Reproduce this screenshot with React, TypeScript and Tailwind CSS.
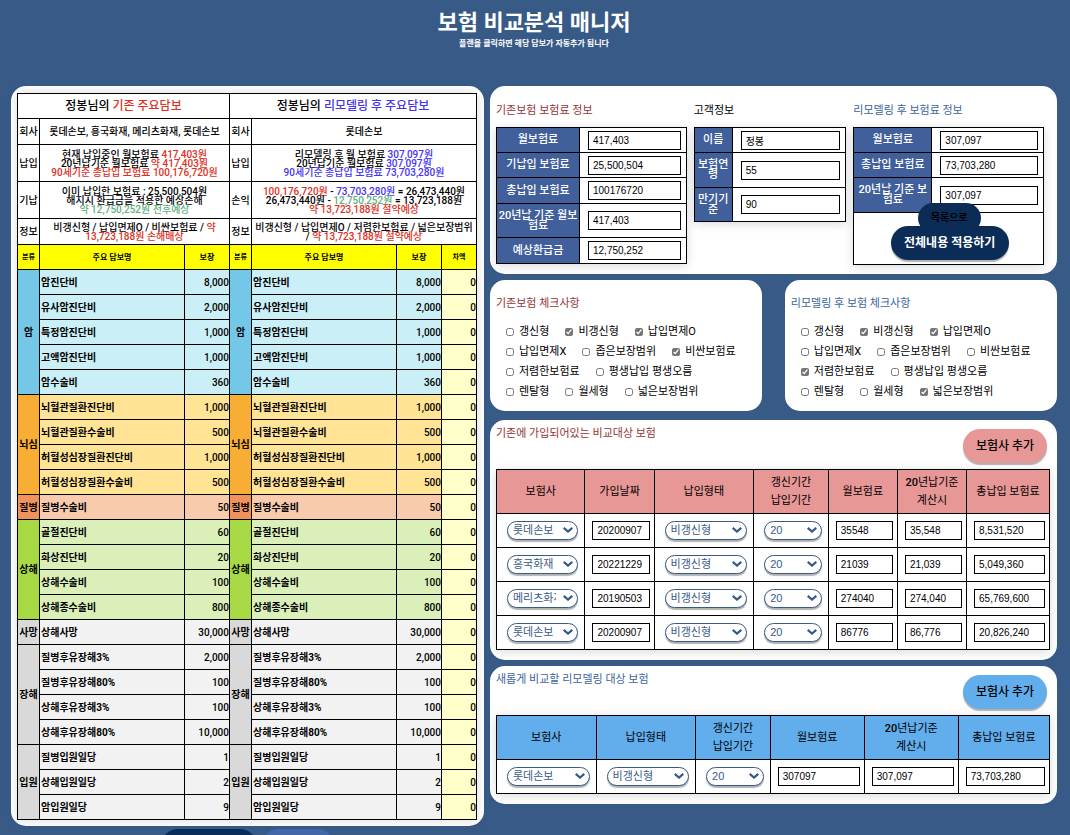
import type { ReactNode } from "react";
import clsx from "clsx";

type Item = { name: string; amount: string };
type Category = { name: string; head: string; row: string; items: Item[] };

const CATEGORIES: Category[] = [
  {
    name: "암",
    head: "bg-[#74c7e7]",
    row: "bg-[#cbeff7]",
    items: [
      { name: "암진단비", amount: "8,000" },
      { name: "유사암진단비", amount: "2,000" },
      { name: "특정암진단비", amount: "1,000" },
      { name: "고액암진단비", amount: "1,000" },
      { name: "암수술비", amount: "360" },
    ],
  },
  {
    name: "뇌심",
    head: "bg-[#f8ae34]",
    row: "bg-[#ffe496]",
    items: [
      { name: "뇌혈관질환진단비", amount: "1,000" },
      { name: "뇌혈관질환수술비", amount: "500" },
      { name: "허혈성심장질환진단비", amount: "1,000" },
      { name: "허혈성심장질환수술비", amount: "500" },
    ],
  },
  {
    name: "질병",
    head: "bg-[#f0925c]",
    row: "bg-[#f8cbad]",
    items: [{ name: "질병수술비", amount: "50" }],
  },
  {
    name: "상해",
    head: "bg-[#a6d944]",
    row: "bg-[#dbf0b9]",
    items: [
      { name: "골절진단비", amount: "60" },
      { name: "화상진단비", amount: "20" },
      { name: "상해수술비", amount: "100" },
      { name: "상해종수술비", amount: "800" },
    ],
  },
  {
    name: "사망",
    head: "bg-[#d9d9d9]",
    row: "bg-[#f2f2f2]",
    items: [{ name: "상해사망", amount: "30,000" }],
  },
  {
    name: "장해",
    head: "bg-[#d9d9d9]",
    row: "bg-[#f2f2f2]",
    items: [
      { name: "질병후유장해3%", amount: "2,000" },
      { name: "질병후유장해80%", amount: "100" },
      { name: "상해후유장해3%", amount: "100" },
      { name: "상해후유장해80%", amount: "10,000" },
    ],
  },
  {
    name: "입원",
    head: "bg-[#d9d9d9]",
    row: "bg-[#f2f2f2]",
    items: [
      { name: "질병입원일당", amount: "1" },
      { name: "상해입원일당", amount: "2" },
      { name: "암입원일당", amount: "9" },
    ],
  },
];

const CHECK_ROWS = [
  ["갱신형", "비갱신형", "납입면제O"],
  ["납입면제X", "좁은보장범위", "비싼보험료"],
  ["저렴한보험료", "평생납입 평생오름"],
  ["렌탈형", "월세형", "넓은보장범위"],
];

const BEFORE_PLANS = [
  { company: "롯데손보", date: "20200907", monthly: "35548", twenty: "35,548", total: "8,531,520" },
  { company: "흥국화재", date: "20221229", monthly: "21039", twenty: "21,039", total: "5,049,360" },
  { company: "메리츠화재", date: "20190503", monthly: "274040", twenty: "274,040", total: "65,769,600" },
  { company: "롯데손보", date: "20200907", monthly: "86776", twenty: "86,776", total: "20,826,240" },
];

const CELL = "border border-black p-0";

const Red = ({ children }: { children: ReactNode }) => <span className="text-[#e0301e]">{children}</span>;
const Blue = ({ children }: { children: ReactNode }) => <span className="text-[#4433f5]">{children}</span>;
const Green = ({ children }: { children: ReactNode }) => <span className="text-[#62b07e]">{children}</span>;

function Card({ className, children }: { className?: string; children: ReactNode }) {
  return <section className={clsx("rounded-[15px] bg-white", className)}>{children}</section>;
}

function TextBox({ id, label, value }: { id?: string; label?: string; value: string }) {
  return (
    <input
      id={id}
      type="text"
      aria-label={label}
      defaultValue={value}
      className="block h-[19px] w-full border border-black bg-white px-1 font-['Liberation_Sans','Noto_Sans_CJK_KR',sans-serif] text-[10px] text-black"
    />
  );
}

function SelectBox({ label, value, options }: { label: string; value: string; options: string[] }) {
  return (
    <div className="relative ml-[10px] mr-[6px]">
      <select
        aria-label={label}
        defaultValue={value}
        className="block h-[19px] w-full appearance-none rounded-[10px] border border-[#375a87] bg-white pl-[5px] pr-[21px] font-['Liberation_Sans','Noto_Sans_CJK_KR',sans-serif] text-[11px] leading-[17px] text-[#375a87] shadow-[0_2px_1px_rgba(0,0,0,0.3)]"
      >
        {options.map((option) => (
          <option key={option}>{option}</option>
        ))}
      </select>
      <svg
        viewBox="0 0 10 6"
        className="pointer-events-none absolute right-[5px] top-[6px] h-[6px] w-[10px]"
        fill="none"
        stroke="#375a87"
        strokeWidth="2.2"
      >
        <path d="M0.7 0.9 L5 4.6 L9.3 0.9" />
      </svg>
    </div>
  );
}

const CompanySelect = ({ value }: { value: string }) => (
  <SelectBox label="보험사" value={value} options={["롯데손보", "흥국화재", "메리츠화재"]} />
);
const TypeSelect = () => <SelectBox label="납입형태" value="비갱신형" options={["비갱신형", "갱신형"]} />;
const TermSelect = () => <SelectBox label="납입기간" value="20" options={["10", "20", "30"]} />;

function SummaryRow({ height, left, right }: { height: string; left: [string, ReactNode]; right: [string, ReactNode] }) {
  return (
    <tr className={height}>
      <th className={clsx(CELL, "font-medium")}>{left[0]}</th>
      <td colSpan={2} className={CELL}>{left[1]}</td>
      <th className={clsx(CELL, "font-medium")}>{right[0]}</th>
      <td colSpan={3} className={CELL}>{right[1]}</td>
    </tr>
  );
}

function CoverageTable() {
  return (
    <table className="w-full table-fixed border-collapse text-center text-[10px] font-medium leading-[9px] shadow-[0_0_10px_rgba(0,0,0,0.15)]">
      <colgroup>
        <col className="w-[22px]" />
        <col />
        <col className="w-[45px]" />
        <col className="w-[22px]" />
        <col />
        <col className="w-[45px]" />
        <col className="w-[35px]" />
      </colgroup>
      <tbody>
        <tr className="h-[25px] text-xs leading-3">
          <th colSpan={3} className={clsx(CELL, "font-medium")}>
            정봉님의 <Red>기존 주요담보</Red>
          </th>
          <th colSpan={4} className={clsx(CELL, "font-medium")}>
            정봉님의 <Blue>리모델링 후 주요담보</Blue>
          </th>
        </tr>
        <SummaryRow
          height="h-[26px]"
          left={["회사", "롯데손보, 흥국화재, 메리츠화재, 롯데손보"]}
          right={["회사", "롯데손보"]}
        />
        <SummaryRow
          height="h-[37px]"
          left={[
            "납입",
            <>
              현재 납입중인 월보험료 <Red>417,403원</Red>
              <br />
              20년납기준 월보험료 <Red>약 417,403원</Red>
              <br />
              <Red>90세기준 총납입 보험료 100,176,720원</Red>
            </>,
          ]}
          right={[
            "납입",
            <>
              리모델링 후 월 보험료 <Blue>307,097원</Blue>
              <br />
              20년납기준 월보험료 <Blue>307,097원</Blue>
              <br />
              <Blue>90세기준 총납입 보험료 73,703,280원</Blue>
            </>,
          ]}
        />
        <SummaryRow
          height="h-[37px]"
          left={[
            "기납",
            <>
              이미 납입한 보험료 : 25,500,504원
              <br />
              해지시 환급금을 적용한 예상손해
              <br />
              <Green>약 12,750,252원 전후예상</Green>
            </>,
          ]}
          right={[
            "손익",
            <>
              <Red>100,176,720원</Red> - <Blue>73,703,280원</Blue> = 26,473,440원
              <br />
              26,473,440원 - <Green>12,750,252원</Green> = 13,723,188원
              <br />
              <Red>약 13,723,188원 절약예상</Red>
            </>,
          ]}
        />
        <SummaryRow
          height="h-[26px]"
          left={[
            "정보",
            <>
              비갱신형 / 납입면제O / 비싼보험료 / <Red>약<br />13,723,188원 손해배상</Red>
            </>,
          ]}
          right={[
            "정보",
            <>
              비갱신형 / 납입면제O / 저렴한보험료 / 넓은보장범위
              <br />/ <Red>약 13,723,188원 절약예상</Red>
            </>,
          ]}
        />
        <tr className="h-[25px] bg-[#ffff00] text-[8px]">
          <th className={clsx(CELL, "text-[7px] font-bold")}>분류</th>
          <th className={clsx(CELL, "font-bold")}>주요 담보명</th>
          <th className={clsx(CELL, "font-bold")}>보장</th>
          <th className={clsx(CELL, "text-[7px] font-bold")}>분류</th>
          <th className={clsx(CELL, "font-bold")}>주요 담보명</th>
          <th className={clsx(CELL, "font-bold")}>보장</th>
          <th className={clsx(CELL, "text-[7px] font-bold")}>차액</th>
        </tr>
        {CATEGORIES.map((category) =>
          category.items.map((item, idx) => (
            <tr key={item.name} className={clsx("h-[25px]", category.row)}>
              {idx === 0 && (
                <th rowSpan={category.items.length} className={clsx(CELL, "font-bold", category.head)}>
                  {category.name}
                </th>
              )}
              <td className="border border-black p-0 pl-px text-left font-bold">{item.name}</td>
              <td className={clsx(CELL, "text-right")}>{item.amount}</td>
              {idx === 0 && (
                <th rowSpan={category.items.length} className={clsx(CELL, "font-bold", category.head)}>
                  {category.name}
                </th>
              )}
              <td className="border border-black p-0 pl-px text-left font-bold">{item.name}</td>
              <td className={clsx(CELL, "text-right")}>{item.amount}</td>
              <td className={clsx(CELL, "bg-[#ffffcc] text-right")}>0</td>
            </tr>
          )),
        )}
      </tbody>
    </table>
  );
}

function InfoRow({ id, height, label, value }: { id: string; height: string; label: ReactNode; value: string }) {
  return (
    <tr className={height}>
      <th className="border border-black bg-[#41609b] p-0 text-center font-medium leading-[10px] text-white">
        <label htmlFor={id}>{label}</label>
      </th>
      <td className="border border-black py-0 pl-2 pr-[5px]">
        <TextBox id={id} value={value} />
      </td>
    </tr>
  );
}

function InfoTable({ title, titleColor, labelWidth, children }: { title: string; titleColor: string; labelWidth: string; children: ReactNode }) {
  return (
    <div>
      <h2 className={clsx("mb-2 text-[11px] leading-4", titleColor)}>{title}</h2>
      <table className="w-full table-fixed border-collapse text-[11px] shadow-[0_2px_10px_rgba(0,0,0,0.15)]">
        <colgroup>
          <col className={labelWidth} />
          <col />
        </colgroup>
        <tbody>{children}</tbody>
      </table>
    </div>
  );
}

function InfoCard() {
  return (
    <Card className="grid grid-cols-[191fr_153fr_191fr] items-start gap-[7px] pb-[9px] pl-[6px] pr-[13px] pt-[17px]">
      <InfoTable title="기존보험 보험료 정보" titleColor="text-[#943434]" labelWidth="w-[83px]">
        <InfoRow id="before-monthly" height="h-[25px]" label="월보험료" value="417,403" />
        <InfoRow id="before-paid" height="h-[25px]" label="기납입 보험료" value="25,500,504" />
        <InfoRow id="before-total" height="h-[26px]" label="총납입 보험료" value="100176720" />
        <InfoRow id="before-twenty" height="h-[34px]" label={<>20년납 기준 월보<br />험료</>} value="417,403" />
        <InfoRow id="before-refund" height="h-[26px]" label="예상환급금" value="12,750,252" />
      </InfoTable>

      <InfoTable title="고객정보" titleColor="text-black" labelWidth="w-[38px]">
        <InfoRow id="customer-name" height="h-[25px]" label="이름" value="정봉" />
        <InfoRow id="customer-age" height="h-[35px]" label={<>보험연<br />령</>} value="55" />
        <InfoRow id="customer-end" height="h-[34px]" label={<>만기기<br />준</>} value="90" />
      </InfoTable>

      <InfoTable title="리모델링 후 보험료 정보" titleColor="text-[#3b64a0]" labelWidth="w-[78px]">
        <InfoRow id="after-monthly" height="h-[25px]" label="월보험료" value="307,097" />
        <InfoRow id="after-total" height="h-[25px]" label="총납입 보험료" value="73,703,280" />
        <InfoRow id="after-twenty" height="h-[35px]" label={<>20년납 기준 보<br />험료</>} value="307,097" />
        <tr className="h-[52px]">
          <td colSpan={2} className="border border-black pb-0 pl-[2px] pr-0 pt-2 text-center">
            <div className="relative inline-block align-middle">
              {/* 적용 버튼 뒤로 겹치는 목록 버튼 */}
              <button
                type="button"
                className="absolute -top-[23px] left-[27px] h-[30px] w-[63px] rounded-[15px] bg-[#0a2c56] text-[10px] font-bold leading-[10px] text-black"
              >
                목록으로
              </button>
              <button
                type="button"
                className="relative h-[34px] w-[118px] rounded-[17px] bg-[#0a2c56] text-xs font-bold text-white shadow-[0_2px_1px_rgba(0,0,0,0.3)]"
              >
                전체내용 적용하기
              </button>
            </div>
          </td>
        </tr>
      </InfoTable>
    </Card>
  );
}

function CheckCard({ title, titleColor, checked }: { title: string; titleColor: string; checked: string[] }) {
  return (
    <Card className="w-[48%] pb-[9px] pl-[6px] pt-4">
      <h2 className={clsx("mb-[10px] text-[11px] leading-4", titleColor)}>{title}</h2>
      {CHECK_ROWS.map((row) => (
        <div key={row[0]} className="flex h-5 items-center gap-4 pl-[10px]">
          {row.map((name) => (
            <label key={name} className="flex items-center gap-[5px] whitespace-nowrap text-[11px] leading-5">
              <input type="checkbox" defaultChecked={checked.includes(name)} className="size-2 accent-[#757575]" />
              {name}
            </label>
          ))}
        </div>
      ))}
    </Card>
  );
}

function PlanCard({ title, titleColor, color, widths, heads, children }: {
  title: string;
  titleColor: string;
  color: string;
  widths: string[];
  heads: ReactNode[];
  children: ReactNode;
}) {
  return (
    <Card className="pb-[10px] pl-[6px] pr-[7px]">
      <div className="flex h-[49px] items-start justify-between pr-[3px]">
        <h2 className={clsx("pt-[6px] text-[11px] leading-4", titleColor)}>{title}</h2>
        <button
          type="button"
          className={clsx("mt-[9px] h-[34px] w-[84px] rounded-[17px] text-xs font-medium text-black shadow-[0_2px_1px_rgba(0,0,0,0.3)]", color)}
        >
          보험사 추가
        </button>
      </div>
      <table className="w-full table-fixed border-collapse text-[11px] shadow-[0_2px_10px_rgba(0,0,0,0.15)]">
        <colgroup>
          {widths.map((width, idx) => (
            <col key={idx} className={width} />
          ))}
        </colgroup>
        <thead>
          <tr className={clsx("h-11", color)}>
            {heads.map((head, idx) => (
              <th key={idx} className="border border-black p-0 text-center font-normal leading-[18px]">
                {head}
              </th>
            ))}
          </tr>
        </thead>
        <tbody>{children}</tbody>
      </table>
    </Card>
  );
}

const InputCell = ({ label, value }: { label: string; value: string }) => (
  <td className="border border-black py-0 pl-[7px] pr-1">
    <TextBox label={label} value={value} />
  </td>
);

const TERM_HEAD = <>갱신기간<br />납입기간</>;
const TWENTY_HEAD = <><span className="font-medium">20</span>년납기준<br />계산시</>;

export default function App() {
  return (
    <div className="min-h-screen overflow-hidden bg-[#375a87] pl-[11px] pr-[13px] font-['Roboto','Noto_Sans_CJK_KR',sans-serif] text-black">
      <header className="h-[86px] pt-[9px] text-center text-white">
        <h1 className="text-[22px] font-bold leading-[28px]">보험 비교분석 매니저</h1>
        <p className="text-[8px] font-bold leading-[14px]">플랜을 클릭하면 해당 담보가 자동추가 됩니다</p>
      </header>

      <main className="grid grid-cols-[473fr_567fr] items-start gap-[6px]">
        <div>
          <Card className="pb-[6px] pl-[6px] pr-[7px] pt-[7px]">
            <CoverageTable />
          </Card>
          <div className="flex h-[9px] justify-center gap-[5px] overflow-hidden pt-[3px]">
            <button type="button" aria-label="저장하기" className="h-[34px] w-[96px] shrink-0 rounded-[17px] bg-[#0a2c56]" />
            <button type="button" aria-label="목록" className="h-[34px] w-[72px] shrink-0 rounded-[17px] bg-[#4167a8]" />
          </div>
        </div>

        <div>
          <InfoCard />
          <div className="mb-[9px] mt-[6px] flex justify-between">
            <CheckCard title="기존보험 체크사항" titleColor="text-[#943434]" checked={["비갱신형", "납입면제O", "비싼보험료"]} />
            <CheckCard
              title="리모델링 후 보험 체크사항"
              titleColor="text-[#3b64a0]"
              checked={["비갱신형", "납입면제O", "저렴한보험료", "넓은보장범위"]}
            />
          </div>

          <PlanCard
            title="기존에 가입되어있는 비교대상 보험"
            titleColor="text-[#943434]"
            color="bg-[#e79796]"
            widths={["w-[16%]", "w-[12.5%]", "w-[18%]", "w-[13.5%]", "w-[12.5%]", "w-[12.5%]", "w-[15%]"]}
            heads={["보험사", "가입날짜", "납입형태", TERM_HEAD, "월보험료", TWENTY_HEAD, "총납입 보험료"]}
          >
            {BEFORE_PLANS.map((plan, idx) => (
              <tr key={idx} className="h-[34px]">
                <td className={CELL}><CompanySelect value={plan.company} /></td>
                <InputCell label="가입날짜" value={plan.date} />
                <td className={CELL}><TypeSelect /></td>
                <td className={CELL}><TermSelect /></td>
                <InputCell label="월보험료" value={plan.monthly} />
                <InputCell label="20년납기준 계산시" value={plan.twenty} />
                <InputCell label="총납입 보험료" value={plan.total} />
              </tr>
            ))}
          </PlanCard>

          <div className="mt-[6px]">
            <PlanCard
              title="새롭게 비교할 리모델링 대상 보험"
              titleColor="text-[#3b64a0]"
              color="bg-[#62adec]"
              widths={["w-[18%]", "w-[18%]", "w-[13.5%]", "w-[17%]", "w-[17%]", "w-[16.5%]"]}
              heads={["보험사", "납입형태", TERM_HEAD, "월보험료", TWENTY_HEAD, "총납입 보험료"]}
            >
              <tr className="h-[34px]">
                <td className={CELL}><CompanySelect value="롯데손보" /></td>
                <td className={CELL}><TypeSelect /></td>
                <td className={CELL}><TermSelect /></td>
                <InputCell label="월보험료" value="307097" />
                <InputCell label="20년납기준 계산시" value="307,097" />
                <InputCell label="총납입 보험료" value="73,703,280" />
              </tr>
            </PlanCard>
          </div>
        </div>
      </main>
    </div>
  );
}
